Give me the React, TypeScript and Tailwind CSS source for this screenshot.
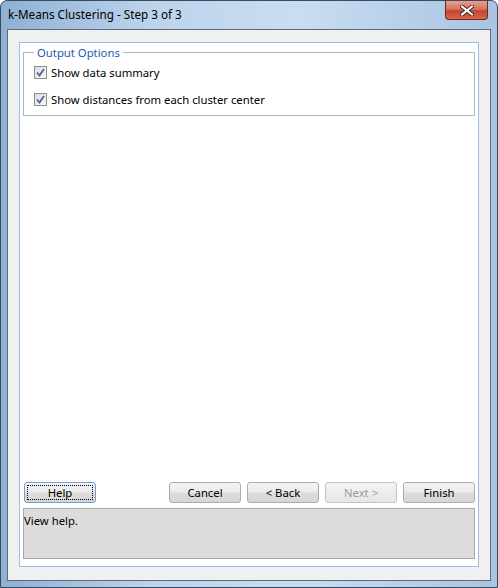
import React from 'react';

const ui = "font-['Segoe_UI','Noto_Sans',sans-serif]";

function CheckBox({ label }: { label: string }) {
    return (
        <label className="flex items-center gap-[4px] h-[14px]">
            <span className="w-[13px] h-[13px] border border-[#8f8f8f] bg-gradient-to-br from-[#dcdcdc] to-[#fbfbfb] flex items-center justify-center">
                <svg width="9" height="9" viewBox="0 0 9 9">
                    <path d="M1 4.5 L3.5 7.5 L8 1" fill="none" stroke="#4b61a0" strokeWidth="1.8" />
                </svg>
            </span>
            <span className="text-[11.3px] text-black leading-none">{label}</span>
        </label>
    );
}

function Btn({ children, focus, disabled }: { children: React.ReactNode; focus?: boolean; disabled?: boolean }) {
    const base = 'w-[72px] h-[21px] rounded-[3px] border text-[11.3px] leading-none flex items-center justify-center';
    if (disabled) {
        return (
            <div className={`${base} border-[#c4c4c4] bg-gradient-to-b from-[#f4f4f4] to-[#e6e6e6] text-[#9a9a9a]`}>
                {children}
            </div>
        );
    }
    return (
        <div className={`${base} ${focus ? 'border-[#6e9fd4]' : 'border-[#adadad]'} bg-[linear-gradient(#f3f3f3_0%,#ebebeb_48%,#dddddd_52%,#d6d6d6_100%)] text-black p-[2px]`}>
            <div className={`w-full h-full flex items-center justify-center ${focus ? 'border border-dotted border-black' : ''}`}>
                {children}
            </div>
        </div>
    );
}

export default function App() {
    return (
        <div className={`${ui} w-[498px] h-[588px] flex flex-col rounded-t-[7px] border border-[#3a4b5e] bg-[linear-gradient(90deg,#8fb0d2_0%,#bcd3ec_30%,#c9ddf2_60%,#a9c4e2_100%)] overflow-hidden`}>
            <div className="h-[28px] flex items-center justify-between pl-[7px] pr-[9px]">
                <span className="text-[11.7px] text-black">k-Means Clustering - Step 3 of 3</span>
                <div className="self-start w-[43px] h-[19px] rounded-b-[4px] border border-t-0 border-[#6a2a22] bg-[linear-gradient(#e8a08f_0%,#d7735e_45%,#c2452c_55%,#d8674a_100%)] flex items-center justify-center">
                    <svg width="14" height="11" viewBox="0 0 14 11">
                        <path d="M2 1.5 L12 9.5 M12 1.5 L2 9.5" stroke="#3b2a2a" strokeWidth="4" strokeLinecap="square" />
                        <path d="M2 1.5 L12 9.5 M12 1.5 L2 9.5" stroke="#ffffff" strokeWidth="2" strokeLinecap="square" />
                    </svg>
                </div>
            </div>
            <div className="flex-1 mx-[6px] mb-[6px] border border-[#5b6b7f] bg-[#f0f0f0] pt-[12px] pl-[11px] pr-[11px] pb-[13px] flex">
                <div className="flex-1 border border-[#9dbde6] bg-white flex flex-col pt-[4px] pl-[3px] pr-[3px] pb-[7px]">
                    <fieldset className="border border-[#b2b6c0] pl-[10px] pr-[10px] pb-[9px]">
                        <legend className="px-[3px] text-[11.3px] text-[#1d5ab0] leading-none">Output Options</legend>
                        <div className="flex flex-col gap-[13px] pt-[7px]">
                            <CheckBox label="Show data summary" />
                            <CheckBox label="Show distances from each cluster center" />
                        </div>
                    </fieldset>
                    <div className="flex-1" />
                    <div className="flex items-center pl-[1px]">
                        <Btn focus>Help</Btn>
                        <div className="flex-1" />
                        <div className="flex gap-[6px]">
                            <Btn>Cancel</Btn>
                            <Btn>&lt; Back</Btn>
                            <Btn disabled>Next &gt;</Btn>
                            <Btn>Finish</Btn>
                        </div>
                    </div>
                    <div className="mt-[5px] h-[51px] border border-[#a6a6a6] bg-[#dcdcdc] text-[11.3px] text-black pt-[4px]">
                        View help.
                    </div>
                </div>
            </div>
        </div>
    );
}
